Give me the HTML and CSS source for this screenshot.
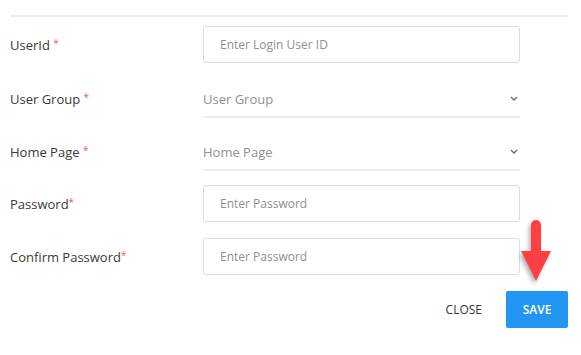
FILE: index.html
```html
<!DOCTYPE html>
<html lang="en">
<head>
  <meta charset="UTF-8">
  <title>Add User</title>
  <link rel="stylesheet" href="styles.css">
</head>
<body>
  <div class="dialog">
    <div class="divider"></div>

    <form class="form">
      <div class="row">
        <label class="label">UserId <span class="req">*</span></label>
        <input class="field" type="text" placeholder="Enter Login User ID">
      </div>
      <div class="row">
        <label class="label">User Group <span class="req">*</span></label>
        <div class="select">
          <span>User Group</span>
          <svg class="chev" width="8" height="5" viewBox="0 0 8 5"><path d="M1 1l3 3 3-3" fill="none" stroke="#666" stroke-width="1.3"/></svg>
        </div>
      </div>
      <div class="row">
        <label class="label">Home Page <span class="req">*</span></label>
        <div class="select">
          <span>Home Page</span>
          <svg class="chev" width="8" height="5" viewBox="0 0 8 5"><path d="M1 1l3 3 3-3" fill="none" stroke="#666" stroke-width="1.3"/></svg>
        </div>
      </div>
      <div class="row">
        <label class="label">Password<span class="req">*</span></label>
        <input class="field" type="password" placeholder="Enter Password">
      </div>
      <div class="row">
        <label class="label">Confirm Password<span class="req">*</span></label>
        <input class="field" type="password" placeholder="Enter Password">
      </div>
    </form>

    <div class="actions">
      <button class="btn btn-close" type="button">CLOSE</button>
      <button class="btn btn-save" type="button">SAVE</button>
      <svg class="arrow" width="40" height="70" viewBox="0 0 40 70">
        <rect x="15" y="1" width="10" height="36" rx="5" fill="#fe3f43"/>
        <path d="M5 32h30l-15 30z" fill="#fe3f43"/>
      </svg>
    </div>
  </div>
</body>
</html>
```

FILE: styles.css
```css
body {
  margin: 0;
  font-family: 'Open Sans', sans-serif;
  background: #fff;
  color: #333;
}
.dialog {
  position: relative;
  padding: 15px 13px 0 10px;
}
.divider {
  height: 2px;
  background: #ececec;
}
.form {
  padding: 9px 48px 0 0;
}
.row {
  display: grid;
  grid-template-columns: 193px 1fr;
  align-items: center;
  height: 37px;
  margin-bottom: 16px;
}
.label {
  font-size: 13px;
  color: #3a3a3a;
}
.req {
  color: #f25a5a;
  font-size: 10px;
  vertical-align: top;
}
.field {
  height: 37px;
  box-sizing: border-box;
  border: 1px solid #dedede;
  border-radius: 3px;
  padding: 0 16px;
  font-family: 'Open Sans', sans-serif;
  font-size: 12px;
  color: #333;
  outline: none;
}
.field::placeholder {
  color: #8f8f8f;
}
.select {
  align-self: start;
  height: 39px;
  box-sizing: border-box;
  padding: 2px 2px 0 0;
  border-bottom: 2px solid #ececec;
  display: flex;
  align-items: center;
  justify-content: space-between;
  font-size: 13px;
  color: #8f8f8f;
}
.actions {
  display: flex;
  justify-content: flex-end;
  gap: 10px;
  margin-top: 1px;
}
.btn {
  height: 37px;
  border: none;
  border-radius: 2px;
  font-family: 'Open Sans', sans-serif;
  font-size: 12px;
  cursor: pointer;
}
.btn-close {
  background: none;
  color: #333;
  padding: 0 14px;
}
.btn-save {
  background: #2196f3;
  color: #fff;
  width: 62px;
  font-weight: 600;
}
.arrow {
  position: absolute;
  right: 25px;
  top: 219px;
  filter: drop-shadow(-2px 3px 2px rgba(0,0,0,0.3));
}
```
